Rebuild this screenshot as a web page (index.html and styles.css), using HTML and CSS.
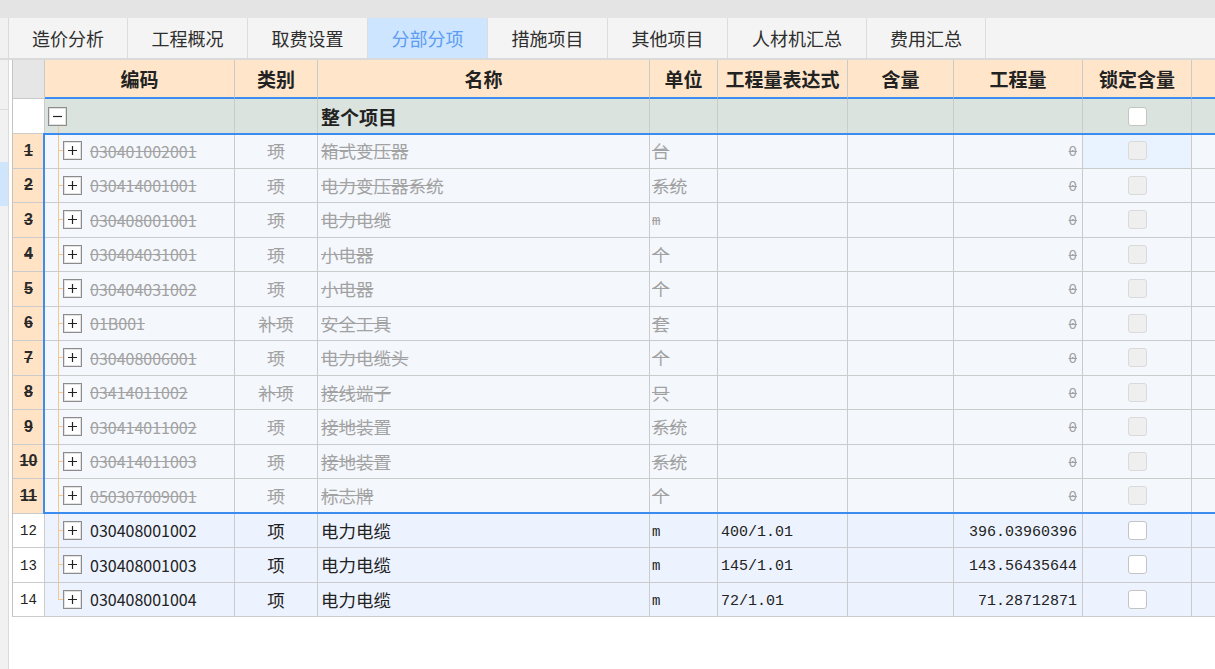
FILE: index.html
```html
<!DOCTYPE html>
<html lang="zh">
<head>
<meta charset="utf-8">
<title>分部分项</title>
<link rel="stylesheet" href="styles.css">
</head>
<body>
<div class="topband"></div>
<div class="app">
  <aside class="side">
    <div class="side-tabs"></div>
    <div class="side-a"></div>
    <div class="side-b"></div>
    <div class="side-sel"></div>
  </aside>
  <main class="work">
    <nav class="tabs">
      <div class="tab w119">造价分析</div>
      <div class="tab">工程概况</div>
      <div class="tab">取费设置</div>
      <div class="tab active">分部分项</div>
      <div class="tab">措施项目</div>
      <div class="tab">其他项目</div>
      <div class="tab w139">人材机汇总</div>
      <div class="tab w119">费用汇总</div>
    </nav>
    <div class="grid-area">
      <div class="grid">
        <div class="row head">
          <div class="cell rn"></div>
          <div class="cell">编码</div>
          <div class="cell">类别</div>
          <div class="cell">名称</div>
          <div class="cell">单位</div>
          <div class="cell">工程量表达式</div>
          <div class="cell">含量</div>
          <div class="cell">工程量</div>
          <div class="cell">锁定含量</div>
          <div class="cell"></div>
        </div>
        <div class="row total">
          <div class="cell rn"></div>
          <div class="cell code top"><svg class="box minus" width="19" height="19" viewBox="0 0 19 19"><rect x="0.5" y="0.5" width="18" height="18" fill="#fff" stroke="#8c8c8c"/><rect x="1.5" y="1.5" width="16" height="16" fill="none" stroke="#e2e2e2"/><path d="M5 9.5H14" stroke="#222" stroke-width="1.2"/></svg></div>
          <div class="cell cat"></div>
          <div class="cell name"><span class="t strong">整个项目</span></div>
          <div class="cell unit"></div>
          <div class="cell expr"></div>
          <div class="cell"></div>
          <div class="cell qty"></div>
          <div class="cell lock"><span class="chk"></span></div>
          <div class="cell"></div>
        </div>

        <div class="row del">
          <div class="cell rn"><span class="t">1</span></div>
          <div class="cell code"><svg class="box" width="19" height="19" viewBox="0 0 19 19"><rect x="0.5" y="0.5" width="18" height="18" fill="#fff" stroke="#8c8c8c"/><rect x="1.5" y="1.5" width="16" height="16" fill="none" stroke="#e2e2e2"/><path d="M5 9.5H14M9.5 5V14" stroke="#222" stroke-width="1.2"/></svg><span class="t num">030401002001</span></div>
          <div class="cell cat"><span class="t">项</span></div>
          <div class="cell name"><span class="t">箱式变压器</span></div>
          <div class="cell unit"><span class="t">台</span></div>
          <div class="cell expr"></div>
          <div class="cell"></div>
          <div class="cell qty"><span class="t zero">0</span></div>
          <div class="cell lock focus"><span class="chk"></span></div>
          <div class="cell"></div>
        </div>
        <div class="row del">
          <div class="cell rn"><span class="t">2</span></div>
          <div class="cell code"><svg class="box" width="19" height="19" viewBox="0 0 19 19"><rect x="0.5" y="0.5" width="18" height="18" fill="#fff" stroke="#8c8c8c"/><rect x="1.5" y="1.5" width="16" height="16" fill="none" stroke="#e2e2e2"/><path d="M5 9.5H14M9.5 5V14" stroke="#222" stroke-width="1.2"/></svg><span class="t num">030414001001</span></div>
          <div class="cell cat"><span class="t">项</span></div>
          <div class="cell name"><span class="t">电力变压器系统</span></div>
          <div class="cell unit"><span class="t">系统</span></div>
          <div class="cell expr"></div>
          <div class="cell"></div>
          <div class="cell qty"><span class="t zero">0</span></div>
          <div class="cell lock"><span class="chk"></span></div>
          <div class="cell"></div>
        </div>
        <div class="row del">
          <div class="cell rn"><span class="t">3</span></div>
          <div class="cell code"><svg class="box" width="19" height="19" viewBox="0 0 19 19"><rect x="0.5" y="0.5" width="18" height="18" fill="#fff" stroke="#8c8c8c"/><rect x="1.5" y="1.5" width="16" height="16" fill="none" stroke="#e2e2e2"/><path d="M5 9.5H14M9.5 5V14" stroke="#222" stroke-width="1.2"/></svg><span class="t num">030408001001</span></div>
          <div class="cell cat"><span class="t">项</span></div>
          <div class="cell name"><span class="t">电力电缆</span></div>
          <div class="cell unit"><span class="t m">m</span></div>
          <div class="cell expr"></div>
          <div class="cell"></div>
          <div class="cell qty"><span class="t zero">0</span></div>
          <div class="cell lock"><span class="chk"></span></div>
          <div class="cell"></div>
        </div>
        <div class="row del">
          <div class="cell rn"><span class="t">4</span></div>
          <div class="cell code"><svg class="box" width="19" height="19" viewBox="0 0 19 19"><rect x="0.5" y="0.5" width="18" height="18" fill="#fff" stroke="#8c8c8c"/><rect x="1.5" y="1.5" width="16" height="16" fill="none" stroke="#e2e2e2"/><path d="M5 9.5H14M9.5 5V14" stroke="#222" stroke-width="1.2"/></svg><span class="t num">030404031001</span></div>
          <div class="cell cat"><span class="t">项</span></div>
          <div class="cell name"><span class="t">小电器</span></div>
          <div class="cell unit"><span class="t">个</span></div>
          <div class="cell expr"></div>
          <div class="cell"></div>
          <div class="cell qty"><span class="t zero">0</span></div>
          <div class="cell lock"><span class="chk"></span></div>
          <div class="cell"></div>
        </div>
        <div class="row del">
          <div class="cell rn"><span class="t">5</span></div>
          <div class="cell code"><svg class="box" width="19" height="19" viewBox="0 0 19 19"><rect x="0.5" y="0.5" width="18" height="18" fill="#fff" stroke="#8c8c8c"/><rect x="1.5" y="1.5" width="16" height="16" fill="none" stroke="#e2e2e2"/><path d="M5 9.5H14M9.5 5V14" stroke="#222" stroke-width="1.2"/></svg><span class="t num">030404031002</span></div>
          <div class="cell cat"><span class="t">项</span></div>
          <div class="cell name"><span class="t">小电器</span></div>
          <div class="cell unit"><span class="t">个</span></div>
          <div class="cell expr"></div>
          <div class="cell"></div>
          <div class="cell qty"><span class="t zero">0</span></div>
          <div class="cell lock"><span class="chk"></span></div>
          <div class="cell"></div>
        </div>
        <div class="row del">
          <div class="cell rn"><span class="t">6</span></div>
          <div class="cell code"><svg class="box" width="19" height="19" viewBox="0 0 19 19"><rect x="0.5" y="0.5" width="18" height="18" fill="#fff" stroke="#8c8c8c"/><rect x="1.5" y="1.5" width="16" height="16" fill="none" stroke="#e2e2e2"/><path d="M5 9.5H14M9.5 5V14" stroke="#222" stroke-width="1.2"/></svg><span class="t num">01B001</span></div>
          <div class="cell cat"><span class="t">补项</span></div>
          <div class="cell name"><span class="t">安全工具</span></div>
          <div class="cell unit"><span class="t">套</span></div>
          <div class="cell expr"></div>
          <div class="cell"></div>
          <div class="cell qty"><span class="t zero">0</span></div>
          <div class="cell lock"><span class="chk"></span></div>
          <div class="cell"></div>
        </div>
        <div class="row del">
          <div class="cell rn"><span class="t">7</span></div>
          <div class="cell code"><svg class="box" width="19" height="19" viewBox="0 0 19 19"><rect x="0.5" y="0.5" width="18" height="18" fill="#fff" stroke="#8c8c8c"/><rect x="1.5" y="1.5" width="16" height="16" fill="none" stroke="#e2e2e2"/><path d="M5 9.5H14M9.5 5V14" stroke="#222" stroke-width="1.2"/></svg><span class="t num">030408006001</span></div>
          <div class="cell cat"><span class="t">项</span></div>
          <div class="cell name"><span class="t">电力电缆头</span></div>
          <div class="cell unit"><span class="t">个</span></div>
          <div class="cell expr"></div>
          <div class="cell"></div>
          <div class="cell qty"><span class="t zero">0</span></div>
          <div class="cell lock"><span class="chk"></span></div>
          <div class="cell"></div>
        </div>
        <div class="row del">
          <div class="cell rn"><span class="t">8</span></div>
          <div class="cell code"><svg class="box" width="19" height="19" viewBox="0 0 19 19"><rect x="0.5" y="0.5" width="18" height="18" fill="#fff" stroke="#8c8c8c"/><rect x="1.5" y="1.5" width="16" height="16" fill="none" stroke="#e2e2e2"/><path d="M5 9.5H14M9.5 5V14" stroke="#222" stroke-width="1.2"/></svg><span class="t num">03414011002</span></div>
          <div class="cell cat"><span class="t">补项</span></div>
          <div class="cell name"><span class="t">接线端子</span></div>
          <div class="cell unit"><span class="t">只</span></div>
          <div class="cell expr"></div>
          <div class="cell"></div>
          <div class="cell qty"><span class="t zero">0</span></div>
          <div class="cell lock"><span class="chk"></span></div>
          <div class="cell"></div>
        </div>
        <div class="row del">
          <div class="cell rn"><span class="t">9</span></div>
          <div class="cell code"><svg class="box" width="19" height="19" viewBox="0 0 19 19"><rect x="0.5" y="0.5" width="18" height="18" fill="#fff" stroke="#8c8c8c"/><rect x="1.5" y="1.5" width="16" height="16" fill="none" stroke="#e2e2e2"/><path d="M5 9.5H14M9.5 5V14" stroke="#222" stroke-width="1.2"/></svg><span class="t num">030414011002</span></div>
          <div class="cell cat"><span class="t">项</span></div>
          <div class="cell name"><span class="t">接地装置</span></div>
          <div class="cell unit"><span class="t">系统</span></div>
          <div class="cell expr"></div>
          <div class="cell"></div>
          <div class="cell qty"><span class="t zero">0</span></div>
          <div class="cell lock"><span class="chk"></span></div>
          <div class="cell"></div>
        </div>
        <div class="row del">
          <div class="cell rn"><span class="t">10</span></div>
          <div class="cell code"><svg class="box" width="19" height="19" viewBox="0 0 19 19"><rect x="0.5" y="0.5" width="18" height="18" fill="#fff" stroke="#8c8c8c"/><rect x="1.5" y="1.5" width="16" height="16" fill="none" stroke="#e2e2e2"/><path d="M5 9.5H14M9.5 5V14" stroke="#222" stroke-width="1.2"/></svg><span class="t num">030414011003</span></div>
          <div class="cell cat"><span class="t">项</span></div>
          <div class="cell name"><span class="t">接地装置</span></div>
          <div class="cell unit"><span class="t">系统</span></div>
          <div class="cell expr"></div>
          <div class="cell"></div>
          <div class="cell qty"><span class="t zero">0</span></div>
          <div class="cell lock"><span class="chk"></span></div>
          <div class="cell"></div>
        </div>
        <div class="row del">
          <div class="cell rn"><span class="t">11</span></div>
          <div class="cell code"><svg class="box" width="19" height="19" viewBox="0 0 19 19"><rect x="0.5" y="0.5" width="18" height="18" fill="#fff" stroke="#8c8c8c"/><rect x="1.5" y="1.5" width="16" height="16" fill="none" stroke="#e2e2e2"/><path d="M5 9.5H14M9.5 5V14" stroke="#222" stroke-width="1.2"/></svg><span class="t num">050307009001</span></div>
          <div class="cell cat"><span class="t">项</span></div>
          <div class="cell name"><span class="t">标志牌</span></div>
          <div class="cell unit"><span class="t">个</span></div>
          <div class="cell expr"></div>
          <div class="cell"></div>
          <div class="cell qty"><span class="t zero">0</span></div>
          <div class="cell lock"><span class="chk"></span></div>
          <div class="cell"></div>
        </div>

        <div class="row live">
          <div class="cell rn"><span class="rnum">12</span></div>
          <div class="cell code"><svg class="box" width="19" height="19" viewBox="0 0 19 19"><rect x="0.5" y="0.5" width="18" height="18" fill="#fff" stroke="#8c8c8c"/><rect x="1.5" y="1.5" width="16" height="16" fill="none" stroke="#e2e2e2"/><path d="M5 9.5H14M9.5 5V14" stroke="#222" stroke-width="1.2"/></svg><span class="num">030408001002</span></div>
          <div class="cell cat">项</div>
          <div class="cell name">电力电缆</div>
          <div class="cell unit"><span class="m">m</span></div>
          <div class="cell expr"><span class="mono">400/1.01</span></div>
          <div class="cell"></div>
          <div class="cell qty"><span class="mono">396.03960396</span></div>
          <div class="cell lock"><span class="chk"></span></div>
          <div class="cell"></div>
        </div>
        <div class="row live">
          <div class="cell rn"><span class="rnum">13</span></div>
          <div class="cell code"><svg class="box" width="19" height="19" viewBox="0 0 19 19"><rect x="0.5" y="0.5" width="18" height="18" fill="#fff" stroke="#8c8c8c"/><rect x="1.5" y="1.5" width="16" height="16" fill="none" stroke="#e2e2e2"/><path d="M5 9.5H14M9.5 5V14" stroke="#222" stroke-width="1.2"/></svg><span class="num">030408001003</span></div>
          <div class="cell cat">项</div>
          <div class="cell name">电力电缆</div>
          <div class="cell unit"><span class="m">m</span></div>
          <div class="cell expr"><span class="mono">145/1.01</span></div>
          <div class="cell"></div>
          <div class="cell qty"><span class="mono">143.56435644</span></div>
          <div class="cell lock"><span class="chk"></span></div>
          <div class="cell"></div>
        </div>
        <div class="row live">
          <div class="cell rn"><span class="rnum">14</span></div>
          <div class="cell code last"><svg class="box" width="19" height="19" viewBox="0 0 19 19"><rect x="0.5" y="0.5" width="18" height="18" fill="#fff" stroke="#8c8c8c"/><rect x="1.5" y="1.5" width="16" height="16" fill="none" stroke="#e2e2e2"/><path d="M5 9.5H14M9.5 5V14" stroke="#222" stroke-width="1.2"/></svg><span class="num">030408001004</span></div>
          <div class="cell cat">项</div>
          <div class="cell name">电力电缆</div>
          <div class="cell unit"><span class="m">m</span></div>
          <div class="cell expr"><span class="mono">72/1.01</span></div>
          <div class="cell"></div>
          <div class="cell qty"><span class="mono">71.28712871</span></div>
          <div class="cell lock"><span class="chk"></span></div>
          <div class="cell"></div>
        </div>

        <div class="selection"></div>
      </div>
    </div>
  </main>
</div>
</body>
</html>
```

FILE: styles.css
```css
* { box-sizing: border-box; }

html, body {
  margin: 0;
  height: 100%;
  overflow: hidden;
  background: #ffffff;
}

body {
  font-family: "Noto Sans CJK SC", "Noto Sans", sans-serif;
  font-size: 17.5px;
  color: #222222;
}

.topband {
  height: 18px;
  background: #e4e4e4;
}

.app {
  display: flex;
  height: calc(100% - 18px);
}

/* left strip */
.side {
  width: 9px;
  flex: none;
  background: #f1f1f1;
  border-right: 1px solid #dadada;
  display: flex;
  flex-direction: column;
}
.side-tabs { height: 42px; border-bottom: 2px solid #dcdcdc; }
.side-a { height: 50px; border-bottom: 1px solid #dcdcdc; }
.side-b { height: 52px; }
.side-sel { height: 44px; background: #cfe5fb; }

.work {
  flex: 1;
  min-width: 0;
}

/* tabs */
.tabs {
  display: flex;
  height: 42px;
  background: #f4f4f4;
  border-bottom: 2px solid #dadada;
}
.tab {
  width: 120px;
  flex: none;
  border-right: 1px solid #dcdcdc;
  display: flex;
  align-items: center;
  justify-content: center;
  color: #2e2e2e;
  font-size: 18px;
}
.tab.w119 { width: 119px; }
.tab.w139 { width: 139px; }
.tab.active {
  background: #cde5ff;
  color: #5c9cf2;
}

/* grid */
.grid-area {
  padding-left: 3px;
}
.grid {
  position: relative;
  width: max-content;
  border-left: 1px solid #c4c4c4;
}
.row {
  display: grid;
  grid-template-columns: 32px 190px 83px 332px 68px 130px 106px 129px 109px 80px;
  height: 34.5px;
}
.cell {
  border-right: 1px solid #cbcbcb;
  border-bottom: 1px solid #cbcbcb;
  display: flex;
  align-items: center;
  overflow: hidden;
  white-space: nowrap;
}

.head { height: 39px; }
.head .cell {
  background-color: #ffe6cb;
  font-weight: bold;
  font-size: 19px;
  justify-content: center;
  border-bottom: 2px solid #3b8cf0;
}
.head .cell.rn {
  background-color: #e6e6e6;
  border-bottom: 1px solid #c8c8c8;
}

.total { height: 35px; }
.total .cell { background-color: #dbe3df; }
.total .cell.rn { background-color: #ffffff; }
.strong { font-weight: bold; font-size: 19px; }

.rn { justify-content: center; }
.cat { justify-content: center; }
.name { padding-left: 3px; }
.unit { padding-left: 2px; }
.expr { padding-left: 3px; }
.qty { justify-content: flex-end; padding-right: 5px; }
.lock { justify-content: center; }

.code {
  padding-left: 18px;
  background-image: linear-gradient(#f5c68e, #f5c68e), linear-gradient(#f5c68e, #f5c68e);
  background-size: 1px 100%, 5px 1px;
  background-position: 13px 0, 13px 50%;
  background-repeat: no-repeat;
}
.code.last {
  background-size: 1px 50%, 5px 1px;
}
.code.top {
  padding-left: 3px;
  background-image: linear-gradient(#f5c68e, #f5c68e);
  background-size: 1px 9px;
  background-position: 13px 100%;
  background-repeat: no-repeat;
}
.box { flex: none; display: block; }
.num {
  margin-left: 8px;
  font-size: 16px;
}
.mono {
  font-family: "Liberation Mono", monospace;
  font-size: 15px;
  padding-top: 4px;
}
.rnum {
  font-family: "Liberation Mono", monospace;
  font-size: 14px;
  padding-top: 2px;
}
.zero {
  font-family: "Liberation Mono", monospace;
  font-size: 14px;
  padding-top: 3px;
}
.m {
  font-family: "Liberation Mono", monospace;
  font-size: 14px;
  padding-top: 3px;
}

.chk {
  width: 19px;
  height: 19px;
  border: 1px solid #c4c4c4;
  border-radius: 3px;
  background: #ffffff;
}

/* struck-out rows */
.del .cell {
  background-color: #f4f7fc;
  color: #a2a2a2;
}
.del .t { text-decoration: line-through; }
.del .cell.rn {
  background-color: #ffe3c4;
  color: #2a2a2a;
  font-family: "Liberation Sans", sans-serif;
  font-weight: bold;
  font-size: 16px;
}
.del .chk {
  background: #efefef;
  border-color: #dadada;
}
.del .cell.focus { background-color: #e9f2ff; }

/* live rows */
.live .cell { background-color: #edf3fe; }
.live .cell.rn { background-color: #ffffff; }

.selection {
  position: absolute;
  left: 30px;
  top: 73px;
  right: 0;
  height: 381px;
  border: 2px solid #3b8cf0;
  pointer-events: none;
}
```
